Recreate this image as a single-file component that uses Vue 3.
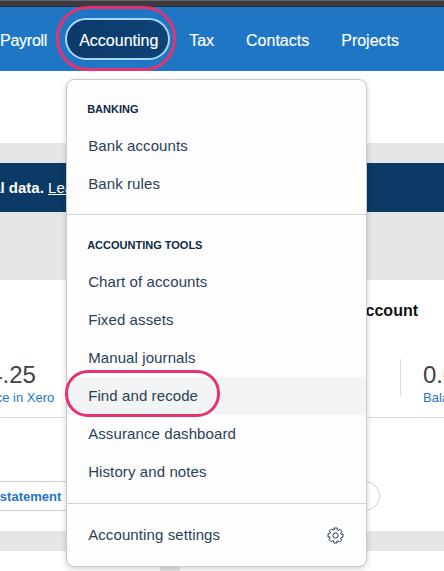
<template>
  <div class="screen">
    <div class="topbar"></div>
    <nav class="nav">
      <a class="nav_item first">Payroll</a>
      <div class="nav_wrap">
        <a class="nav_item active">Accounting</a>
        <span class="ring ring_nav"></span>
        <!-- dropdown -->
        <div class="menu">
          <div class="menu_sec">
            <div class="menu_label">BANKING</div>
            <a v-for="item in banking" :key="item" class="menu_row">{{ item }}</a>
          </div>
          <div class="menu_sec">
            <div class="menu_label">ACCOUNTING TOOLS</div>
            <a
              v-for="item in tools"
              :key="item"
              class="menu_row"
              :class="{ hover: item === 'Find and recode' }"
            >
              {{ item }}
              <span v-if="item === 'Find and recode'" class="ring ring_row"></span>
            </a>
          </div>
          <div class="menu_sec last">
            <a class="menu_row settings">
              Accounting settings
              <svg class="gear" viewBox="0 0 20 20" fill="none" stroke="#22384e" stroke-width="1.15" stroke-linejoin="round">
                <path :d="gearPath" />
                <circle cx="10" cy="10" r="3.1" />
              </svg>
            </a>
          </div>
        </div>
      </div>
      <a class="nav_item">Tax</a>
      <a class="nav_item">Contacts</a>
      <a class="nav_item">Projects</a>
    </nav>

    <div class="spacer"></div>

    <main class="main">
      <div class="banner">
        <span class="banner_in"><b>Connect your financial data.</b> <u>Learn more</u></span>
      </div>

      <section class="card">
        <div class="card_cols">
          <div class="col_left">
            <div class="stat stat_left">
              <div class="stat_num">214.25</div>
              <a class="stat_link">Balance in Xero</a>
            </div>
          </div>
          <div class="col_right">
            <h3 class="acct_title">Business Savings Account</h3>
            <div class="stat_row">
              <div class="stat spacer_stat"></div>
              <div class="stat stat_right">
                <div class="stat_num">0.00</div>
                <a class="stat_link">Balance in Xero</a>
              </div>
            </div>
          </div>
        </div>
        <div class="card_actions">
          <a class="pill_btn pill_left">Import a bank statement</a>
          <a class="pill_btn pill_right">Reconcile</a>
        </div>
      </section>

      <div class="lower">
        <div class="lower_card"></div>
        <div class="lower_card"></div>
      </div>
    </main>
  </div>
</template>

<script setup>
const banking = ["Bank accounts", "Bank rules"];
const tools = [
  "Chart of accounts",
  "Fixed assets",
  "Manual journals",
  "Find and recode",
  "Assurance dashboard",
  "History and notes",
];

// 8 tooth gear outline
const gearPath = (() => {
  const pt = (deg, r) => {
    const a = ((deg - 90) * Math.PI) / 180;
    return `${(10 + r * Math.cos(a)).toFixed(2)} ${(10 + r * Math.sin(a)).toFixed(2)}`;
  };
  let d = "";
  for (let i = 0; i < 8; i++) {
    const c = i * 45;
    d += `${i ? "L" : "M"}${pt(c - 12, 9)} L${pt(c + 12, 9)} L${pt(c + 21, 6.9)} L${pt(c + 33, 6.9)} `;
  }
  return d + "Z";
})();
</script>

<style>
html,
body {
  margin: 0;
  background: #fff;
}
</style>

<style scoped>
.screen {
  width: 444px;
  height: 571px;
  overflow: hidden;
  background: #fff;
  font-family: "Liberation Sans", Arial, sans-serif;
}

.topbar {
  height: 5px;
  background: #3c3c40;
  border-top: 1px solid #66666a;
  border-bottom: 1px solid #2c2c30;
}

.nav {
  height: 64px;
  display: flex;
  align-items: center;
  gap: 6px;
  background: #1f76c4;
}
.nav_wrap {
  position: relative;
}
.nav_item {
  display: block;
  box-sizing: border-box;
  height: 42px;
  line-height: 45px;
  padding: 0 13px;
  font-size: 16px;
  color: #fff;
  white-space: nowrap;
  -webkit-text-stroke: 0.15px #fff;
}
.first {
  margin-left: -13px;
  margin-right: -1px;
  letter-spacing: -0.25px;
}
.active {
  line-height: 41px;
  padding: 0 12px;
  width: 105px;
  border: 2px solid #a9d6f7;
  border-radius: 21px;
  background: linear-gradient(90deg, #0c3a69, #0e4378);
}

.ring {
  position: absolute;
  box-sizing: border-box;
  border: 3px solid #e5336f;
  pointer-events: none;
}
.ring_nav {
  left: -9px;
  right: -6px;
  top: -12px;
  bottom: -11px;
  border-radius: 32px;
}
.ring_row {
  left: -2px;
  top: -7px;
  width: 155px;
  height: 47px;
  border-radius: 23px;
}

.menu {
  position: absolute;
  left: 1px;
  top: 61px;
  width: 301px;
  box-sizing: border-box;
  background: #fdfdfe;
  border: 1px solid #c9c9cc;
  border-radius: 8px;
  box-shadow: 0 2px 6px rgba(0, 0, 0, 0.18);
  z-index: 2;
}
.menu_sec {
  padding: 21px 0 11px;
  border-bottom: 1px solid #d0d2d5;
}
.menu_sec + .menu_sec {
  padding-top: 22px;
}
.menu_sec:nth-child(2) {
  padding-bottom: 12px;
}
.menu_sec.last {
  padding: 12px 0;
  border-bottom: none;
}
.menu_label {
  height: 16px;
  line-height: 16px;
  margin-bottom: 10px;
  padding-left: 20px;
  font-size: 11px;
  font-weight: 700;
  color: #0e2a45;
}
.menu_row {
  position: relative;
  display: block;
  height: 38px;
  line-height: 38px;
  padding-left: 21px;
  font-size: 15px;
  letter-spacing: 0.1px;
  color: #2a4057;
}
.hover {
  background: #f2f3f4;
}
.settings {
  display: flex;
  align-items: center;
  justify-content: space-between;
  padding-right: 22px;
}
.gear {
  width: 17px;
  height: 17px;
}

.spacer {
  height: 72px;
}

.main {
  padding-top: 20px;
  background: #e6e6e8;
}
.banner {
  height: 49px;
  display: flex;
  align-items: center;
  background: #0b3a66;
  color: #fff;
  font-size: 15px;
  white-space: nowrap;
}
.banner_in {
  margin-left: -157px;
}

.card {
  margin-top: 68px;
  height: 251px;
  overflow: hidden;
  background: #fff;
}
.card_cols {
  display: flex;
  height: 137px;
  border-bottom: 1px solid #dcdcde;
}
.col_left {
  width: 230px;
  flex: none;
  padding-top: 81px;
}
.col_right {
  width: 214px;
  flex: none;
  padding-top: 21px;
}
.acct_title {
  margin: 0 26px 0 -20px;
  height: 20px;
  line-height: 20px;
  font-size: 16px;
  font-weight: 700;
  color: #111;
  text-align: right;
  white-space: nowrap;
}
.stat_row {
  display: flex;
  margin-top: 38px;
}
.spacer_stat {
  width: 170px;
  height: 37px;
  flex: none;
  border-right: 1px solid #dcdcde;
}
.stat_right {
  margin-top: 2px;
  padding-left: 22px;
  white-space: nowrap;
}
.stat_left {
  margin-left: -37.5px;
  white-space: nowrap;
}
.stat_num {
  height: 29px;
  line-height: 28px;
  font-size: 24px;
  color: #404245;
}
.stat_link {
  display: block;
  line-height: 16px;
  font-size: 13px;
  color: #1f76c4;
}

.card_actions {
  display: flex;
  padding-top: 63px;
}
.pill_btn {
  box-sizing: border-box;
  height: 30px;
  line-height: 29px;
  border: 1px solid #d0d0d3;
  font-size: 13px;
  font-weight: 700;
  color: #1f76c4;
  white-space: nowrap;
}
.pill_left {
  margin-left: -102px;
  width: 190px;
  padding-left: 12px;
  flex: none;
  border-radius: 4px;
}
.pill_right {
  margin-left: 80px;
  width: 212px;
  flex: none;
  padding-left: 20px;
  border-radius: 15px;
}

.lower {
  display: grid;
  grid-template-columns: 160px 1fr;
  gap: 20px;
  margin-top: 20px;
}
.lower_card {
  height: 40px;
  background: #fff;
}
</style>
